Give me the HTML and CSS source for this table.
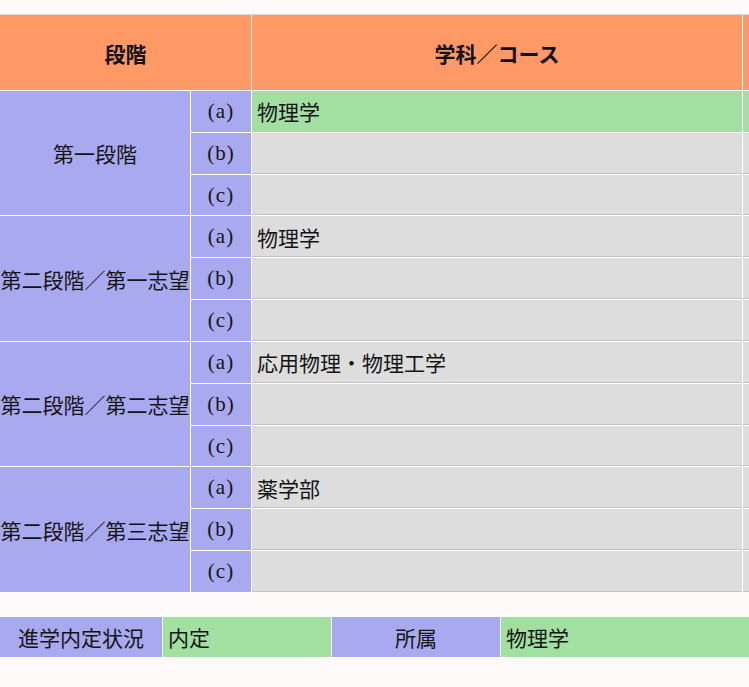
FILE: index.html
```html
<!DOCTYPE html>
<html lang="ja">
<head>
<meta charset="utf-8">
<title>進学選択</title>
<link rel="stylesheet" href="styles.css">
</head>
<body>
<div class="page">
  <div class="course-table">
    <div class="head span2">段階</div>
    <div class="head">学科／コース</div>
    <div class="head"></div>

    <div class="stage rows3">第一段階</div>
    <div class="mark">(a)</div><div class="val ok">物理学</div><div class="val ok"></div>
    <div class="mark">(b)</div><div class="val"></div><div class="val"></div>
    <div class="mark">(c)</div><div class="val"></div><div class="val"></div>

    <div class="stage rows3">第二段階／第一志望</div>
    <div class="mark">(a)</div><div class="val">物理学</div><div class="val"></div>
    <div class="mark">(b)</div><div class="val"></div><div class="val"></div>
    <div class="mark">(c)</div><div class="val"></div><div class="val"></div>

    <div class="stage rows3">第二段階／第二志望</div>
    <div class="mark">(a)</div><div class="val">応用物理・物理工学</div><div class="val"></div>
    <div class="mark">(b)</div><div class="val"></div><div class="val"></div>
    <div class="mark">(c)</div><div class="val"></div><div class="val"></div>

    <div class="stage rows3">第二段階／第三志望</div>
    <div class="mark">(a)</div><div class="val">薬学部</div><div class="val"></div>
    <div class="mark">(b)</div><div class="val"></div><div class="val"></div>
    <div class="mark">(c)</div><div class="val"></div><div class="val"></div>
  </div>

  <div class="status-table">
    <div class="label">進学内定状況</div>
    <div class="value">内定</div>
    <div class="label">所属</div>
    <div class="value">物理学</div>
  </div>
</div>
</body>
</html>
```

FILE: styles.css
```css
html, body {
  margin: 0;
  padding: 0;
}
body {
  background: #fffafa;
  color: #141414;
  font-family: "Noto Sans CJK JP", "Noto Sans", sans-serif;
  font-size: 21px;
  overflow: hidden;
}
.page {
  padding-top: 14px;
}
.course-table {
  display: grid;
  grid-template-columns: 190px 60px 490px 1fr;
  grid-template-rows: 75px repeat(12, 40.83px);
  gap: 1px;
  background: #ffffff;
  border-top: 1px solid #dcd6d6;
}
.head {
  background: #ff9966;
  font-weight: bold;
  font-size: 21px;
  display: flex;
  align-items: center;
  justify-content: center;
  color: #111;
}
.span2 {
  grid-column: span 2;
}
.stage {
  background: #a9a9ef;
  display: flex;
  align-items: center;
  justify-content: center;
  white-space: nowrap;
}
.rows3 {
  grid-row: span 3;
}
.mark {
  background: #a9a9ef;
  font-family: "Liberation Serif", serif;
  font-size: 21px;
  letter-spacing: 1px;
  display: flex;
  align-items: center;
  justify-content: center;
}
.val {
  background: #dddddd;
  display: flex;
  align-items: center;
  padding-left: 5px;
  box-shadow: inset 0 -1px 0 #c4c4c4;
}
.val.ok {
  background: #a2e0a2;
  box-shadow: none;
}
.status-table {
  margin-top: 25px;
  display: grid;
  grid-template-columns: 162px 168px 168px 1fr;
  grid-template-rows: 40px;
  gap: 1px;
  background: #f4f0f0;
}
.label {
  background: #a9a9ef;
  display: flex;
  align-items: center;
  justify-content: center;
}
.value {
  background: #a2e0a2;
  display: flex;
  align-items: center;
  padding-left: 5px;
}
```
